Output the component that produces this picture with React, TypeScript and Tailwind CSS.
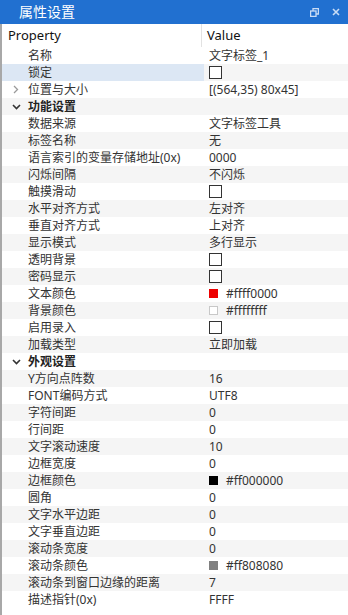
import React from 'react';

type Row =
  | { kind: 'cat'; name: string }
  | { kind: 'prop'; name: string; value?: string; check?: boolean; swatch?: string; expander?: boolean; selected?: boolean };

const rows: Row[] = [
  { kind: 'prop', name: '名称', value: '文字标签_1' },
  { kind: 'prop', name: '锁定', check: true, selected: true },
  { kind: 'prop', name: '位置与大小', value: '[(564,35) 80x45]', expander: true },
  { kind: 'cat', name: '功能设置' },
  { kind: 'prop', name: '数据来源', value: '文字标签工具' },
  { kind: 'prop', name: '标签名称', value: '无' },
  { kind: 'prop', name: '语言索引的变量存储地址(0x)', value: '0000' },
  { kind: 'prop', name: '闪烁间隔', value: '不闪烁' },
  { kind: 'prop', name: '触摸滑动', check: true },
  { kind: 'prop', name: '水平对齐方式', value: '左对齐' },
  { kind: 'prop', name: '垂直对齐方式', value: '上对齐' },
  { kind: 'prop', name: '显示模式', value: '多行显示' },
  { kind: 'prop', name: '透明背景', check: true },
  { kind: 'prop', name: '密码显示', check: true },
  { kind: 'prop', name: '文本颜色', value: '#ffff0000', swatch: 'red' },
  { kind: 'prop', name: '背景颜色', value: '#ffffffff', swatch: 'white' },
  { kind: 'prop', name: '启用录入', check: true },
  { kind: 'prop', name: '加载类型', value: '立即加载' },
  { kind: 'cat', name: '外观设置' },
  { kind: 'prop', name: 'Y方向点阵数', value: '16' },
  { kind: 'prop', name: 'FONT编码方式', value: 'UTF8' },
  { kind: 'prop', name: '字符间距', value: '0' },
  { kind: 'prop', name: '行间距', value: '0' },
  { kind: 'prop', name: '文字滚动速度', value: '10' },
  { kind: 'prop', name: '边框宽度', value: '0' },
  { kind: 'prop', name: '边框颜色', value: '#ff000000', swatch: 'black' },
  { kind: 'prop', name: '圆角', value: '0' },
  { kind: 'prop', name: '文字水平边距', value: '0' },
  { kind: 'prop', name: '文字垂直边距', value: '0' },
  { kind: 'prop', name: '滚动条宽度', value: '0' },
  { kind: 'prop', name: '滚动条颜色', value: '#ff808080', swatch: 'gray' },
  { kind: 'prop', name: '滚动条到窗口边缘的距离', value: '7' },
  { kind: 'prop', name: '描述指针(0x)', value: 'FFFF' },
];

function Swatch({ color }: { color: string }) {
  if (color === 'red') return <span className="w-[9px] h-[9px] bg-[#ee0000] mr-[8px]" />;
  if (color === 'black') return <span className="w-[9px] h-[9px] bg-black mr-[8px]" />;
  if (color === 'gray') return <span className="w-[9px] h-[9px] bg-[#808080] mr-[8px]" />;
  return <span className="w-[9px] h-[9px] bg-white border border-[#c8c8c8] mr-[8px]" />;
}

function PropRow({ row, index }: { row: Row; index: number }) {
  const striped = index % 2 === 1;
  const bg = striped ? 'bg-[#f5f5f5]' : 'bg-white';

  if (row.kind === 'cat') {
    return (
      <div className={`flex h-[17px] items-center ${bg}`}>
        <span className="w-[26px] flex justify-center pl-[2px]">
          <svg width="9" height="6" viewBox="0 0 9 6" fill="none" stroke="#333" strokeWidth="1.6">
            <path d="M1 1l3.5 3.5L8 1" />
          </svg>
        </span>
        <span className="font-bold text-[#222]">{row.name}</span>
      </div>
    );
  }

  return (
    <div className={`flex h-[17px] items-center ${bg}`}>
      <div className={`w-[202px] h-full flex items-center ${row.selected ? 'bg-[#dce7f4]' : ''}`}>
        <span className="w-[26px] flex justify-center pl-[2px]">
          {row.expander && (
            <svg width="6" height="9" viewBox="0 0 6 9" fill="none" stroke="#9a9a9a" strokeWidth="1.3">
              <path d="M1 1l3.5 3.5L1 8" />
            </svg>
          )}
        </span>
        <span className="text-[#333] whitespace-nowrap">{row.name}</span>
      </div>
      <div className="flex-1 flex items-center pl-[5px] text-[#333] whitespace-nowrap">
        {row.check ? (
          <span className="w-[13px] h-[13px] border border-[#333] bg-white" />
        ) : (
          <>
            {row.swatch && <Swatch color={row.swatch} />}
            <span>{row.value}</span>
          </>
        )}
      </div>
    </div>
  );
}

export default function App() {
  return (
    <div
      className="w-[348px] h-[615px] bg-white flex flex-col overflow-hidden text-[12px] leading-none"
      style={{ fontFamily: '"Segoe UI", "Noto Sans", "Noto Sans CJK SC", sans-serif' }}
    >
      {/* Title bar */}
      <div className="h-[24px] bg-[#2170d0] flex items-center text-white shrink-0">
        <span className="pl-[19px] text-[14px] flex-1">属性设置</span>
        <svg width="9" height="9" viewBox="0 0 9 9" fill="none" stroke="#c9dcf5" strokeWidth="1.3" className="mr-[13px]">
          <rect x="0.6" y="3" width="5.4" height="5.4" />
          <path d="M3 3V0.6h5.4V6H6" />
        </svg>
        <svg width="8" height="8" viewBox="0 0 8 8" stroke="#c9dcf5" strokeWidth="1.6" className="mr-[8px]">
          <path d="M1 1l6 6M7 1l-6 6" />
        </svg>
      </div>

      <div className="flex-1 flex flex-col border-l-2 border-[#a8a8a8]">
        {/* Header */}
        <div className="h-[23px] flex items-center shrink-0 text-[13px] text-[#111]">
          <div className="w-[200px] h-full flex items-center pl-[6px] border-r border-[#e2e2e2]">Property</div>
          <div className="flex-1 pl-[5px]">Value</div>
        </div>
        {rows.map((r, i) => (
          <PropRow key={i} row={r} index={i} />
        ))}
      </div>
    </div>
  );
}
